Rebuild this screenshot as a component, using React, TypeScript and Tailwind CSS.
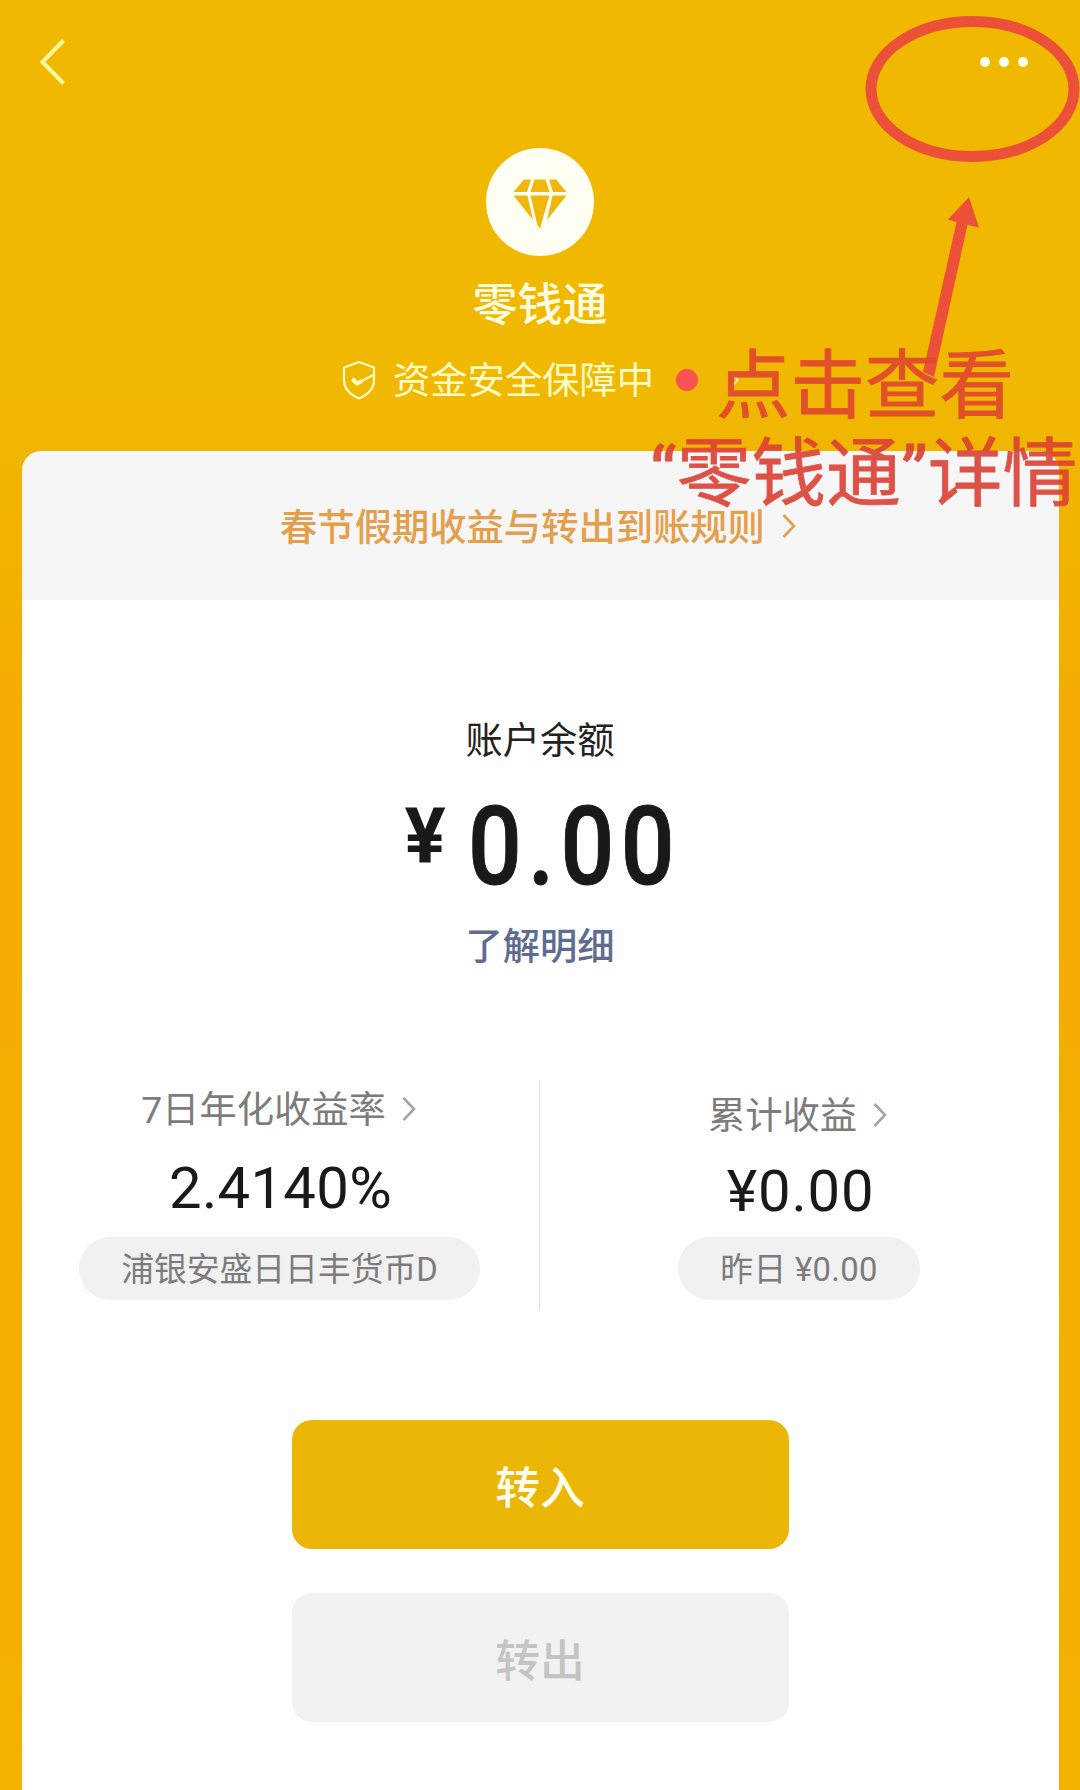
import clsx from "clsx";

interface ChevronProps {
  className?: string;
}

interface StatProps {
  label: string;
  value: string;
  note: string;
  labelClass: string;
  valueClass: string;
  noteClass: string;
}

function Chevron({ className }: ChevronProps) {
  return (
    <svg viewBox="0 0 14 26" fill="none" stroke="currentColor" strokeWidth="2.6" className={clsx("shrink-0", className)}>
      <path d="M1.5 2 12 13 1.5 24" />
    </svg>
  );
}

function Diamond() {
  return (
    <svg viewBox="0 0 54 50" fill="#f0b70c" className="mt-[3px] h-[50px] w-[54px]">
      <path d="M11 .5H18L14 13H.5Z" />
      <path d="M21.500 .5H32.500L36.500 13H17.500Z" />
      <path d="M36 .5H43L53.500 13H40Z" />
      <path d="M.5 16.500H14.500L20 41Z" />
      <path d="M17.500 16.500H36.500L27 49.500 24.500 46.500Z" />
      <path d="M39.500 16.500H53.500L34 41Z" />
    </svg>
  );
}

function Shield() {
  return (
    <svg viewBox="0 0 34 40" fill="none" stroke="#fffbc4" strokeWidth="2.2" strokeLinejoin="round" className="h-10 w-[34px]">
      <path d="M17 2 32 7.500V20C32 29 25 35 17 38.500 9 35 2 29 2 20V7.500Z" />
      <path d="M10.500 18.500 15 23.500 32 14.500" />
      <path d="M10.500 19 15 23.500 20 21" strokeWidth="4" />
    </svg>
  );
}

function Stat({ label, value, note, labelClass, valueClass, noteClass }: StatProps) {
  return (
    <div className="flex flex-col items-center">
      <div className={clsx("flex h-10 items-center text-[37.3px] leading-10 text-[#7c7c7c]", labelClass)}>
        <span className="pt-[4px]">{label}</span>
        <Chevron className="mt-[1px] ml-[16px] h-[26px] w-[14px] text-[#a5a5a5]" />
      </div>
      <p className={clsx("h-[60px] text-[58px] leading-[60px] text-[#191919]", valueClass)}>{value}</p>
      <p className={clsx("flex h-[63px] items-center justify-center rounded-full bg-[#f1f1f1] pt-[4px] text-[32.8px] text-[#7c7c7c]", noteClass)}>{note}</p>
    </div>
  );
}

function Annotation() {
  return (
    <div className="pointer-events-none absolute inset-0">
      <svg viewBox="0 0 1080 560" className="absolute top-0 left-0 h-[560px] w-[1080px]">
        <ellipse cx="972.500" cy="89" rx="101.500" ry="67.500" fill="none" stroke="#ec5038" strokeWidth="11" />
        <path d="M969 197 979 227.500 967.500 225 934 377 923 372 956.500 222 948 219.500Z" fill="#ec5038" />
      </svg>
      <p className="absolute top-[343px] left-[716px] text-[74.5px] leading-[87px] whitespace-nowrap text-[#e0452f] opacity-90 [-webkit-text-stroke:0.8px_#e0452f]">点击查看</p>
      <p className="absolute top-[431px] left-[650px] text-[74.5px] leading-[87px] tracking-[0.3px] whitespace-nowrap text-[#dc4034] opacity-90 [-webkit-text-stroke:0.8px_#dc4034]">“零钱通”详情</p>
    </div>
  );
}

export default function App() {
  return (
    <div className="relative flex h-[1790px] w-[1080px] flex-col overflow-hidden bg-linear-to-b from-[#f0b900] from-20% via-[#f3ac02] via-40% to-[#f3b102] font-[Roboto,'Noto_Sans_CJK_SC',sans-serif]" lang="zh-CN">
      <header className="flex h-[124px] items-center justify-between pr-[52px] pl-10">
        <svg viewBox="0 0 26 48" fill="none" stroke="#fff6a0" strokeWidth="4" className="h-12 w-[26px]">
          <path d="M23.500 2.500 2.500 24 23.500 45.500" />
        </svg>
        <div className="flex gap-[9px]">
          <i className="size-[10px] rounded-full bg-[#fffff0]" />
          <i className="size-[10px] rounded-full bg-[#fffff0]" />
          <i className="size-[10px] rounded-full bg-[#fffff0]" />
        </div>
      </header>

      <section className="flex h-[327px] flex-col items-center pt-6">
        <div className="mr-[1px] flex size-[108px] items-center justify-center rounded-full bg-[#fffef2]">
          <Diamond />
        </div>
        <h1 className="mt-[24px] text-[45px] leading-[52px] font-medium text-[#fffde0]">零钱通</h1>
        <div className="mt-[28px] ml-[342px] flex h-10 items-center self-start">
          <Shield />
          <span className="ml-[17px] pt-px text-[37.3px] leading-10 whitespace-nowrap text-[#fffbc4]">资金安全保障中</span>
          <i className="ml-[22px] size-[22px] shrink-0 rounded-full bg-[#fa5151]" />
          <Chevron className="ml-[33px] h-4 w-2 text-[#fffbc4]" />
        </div>
      </section>

      <main className="mx-[21.5px] flex flex-1 flex-col items-center overflow-hidden rounded-t-[20px] bg-[#fefefe]">
        <div className="flex h-[149px] w-full items-center justify-center bg-[#f6f6f6] pr-1 text-[37.3px] font-medium text-[#e3a04c]">
          <span className="pt-[7px]">春节假期收益与转出到账规则</span>
          <Chevron className="ml-[17px] h-[26px] w-[14px]" />
        </div>

        <p className="mt-[121px] text-[37.3px] leading-10 text-[#222]">账户余额</p>
        <div className="mt-[25px] ml-[383px] flex h-[120px] items-start self-start font-medium text-[#191919]">
          <span className="mt-[11px] mr-[18px] w-[45px] text-[77px] leading-[80px] font-bold">¥</span>
          <span className="origin-left scale-x-[0.86] text-[110px] leading-[122px] tracking-[7.3px] [-webkit-text-stroke:1px_#191919]">0.00</span>
        </div>
        <p className="mt-[21px] text-[37.3px] leading-10 font-medium text-[#5f6c92]">了解明细</p>

        <div className="mt-[114px] flex h-[229px] w-full">
          <div className="flex w-[516px] justify-center">
            <Stat label="7日年化收益率" value="2.4140%" note="浦银安盛日日丰货币D" labelClass="mt-[7px] mr-[2px]" valueClass="mt-[30px] ml-[2px] tracking-[0.3px]" noteClass="mt-[19px] w-[401px]" />
          </div>
          <div className="ml-px w-px bg-[#dcdcdc]" />
          <div className="flex flex-1 justify-center">
            <Stat label="累计收益" value="¥0.00" note="昨日 ¥0.00" labelClass="mt-[13px] mr-[3px]" valueClass="mt-[27px] ml-[3px] tracking-[0.8px]" noteClass="mt-[16px] w-[242px] tracking-[0.3px]" />
          </div>
        </div>

        <button className="mt-[110px] h-[129px] w-[497px] rounded-[20px] bg-[#ecb606] pt-[9px] text-[44.8px] font-medium text-[#fffff0]">转入</button>
        <button className="mt-[44px] h-[129px] w-[497px] rounded-[20px] bg-[#f2f2f2] pt-[9px] text-[44.8px] font-medium text-[#c4c4c4]">转出</button>
      </main>

      <Annotation />
    </div>
  );
}
